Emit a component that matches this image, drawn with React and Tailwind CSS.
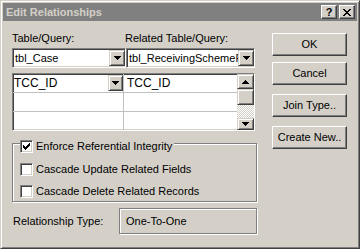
const raised =
  'border border-t-white border-l-white border-b-[#404040] border-r-[#404040] shadow-[inset_-1px_-1px_0_#808080]';
const raisedSmall =
  'border border-t-[#d4d0c8] border-l-[#d4d0c8] border-b-[#404040] border-r-[#404040] shadow-[inset_1px_1px_0_#fff,inset_-1px_-1px_0_#808080]';
const sunken =
  'border border-t-[#808080] border-l-[#808080] border-b-white border-r-white shadow-[inset_1px_1px_0_#404040,inset_-1px_-1px_0_#d4d0c8]';
const etched = 'border border-[#808080] shadow-[inset_1px_1px_0_#fff,1px_1px_0_#fff]';

/** Classic 7x4 pixel arrow. */
function Arrow({ up = false }) {
  const rows = [
    [0, 7],
    [1, 5],
    [2, 3],
    [3, 1],
  ];
  return (
    <svg width="7" height="4" viewBox="0 0 7 4" className="block" shapeRendering="crispEdges">
      {rows.map(([i, w]) => (
        <rect key={i} x={i} y={up ? 3 - i : i} width={w} height="1" fill="#000" />
      ))}
    </svg>
  );
}

function Check() {
  const tops = [2, 3, 4, 3, 2, 1, 0];
  return (
    <svg width="7" height="7" viewBox="0 0 7 7" className="block" shapeRendering="crispEdges">
      {tops.map((t, c) => (
        <rect key={c} x={c} y={t} width="1" height="3" fill="#000" />
      ))}
    </svg>
  );
}

function CloseGlyph() {
  const px = [
    [0, 1, 6, 7],
    [1, 2, 5, 6],
    [2, 3, 4, 5],
    [3, 4],
    [2, 3, 4, 5],
    [1, 2, 5, 6],
    [0, 1, 6, 7],
  ];
  return (
    <svg width="8" height="7" viewBox="0 0 8 7" className="block" shapeRendering="crispEdges">
      {px.map((row, y) => row.map((x) => <rect key={`${x}-${y}`} x={x} y={y} width="1" height="1" fill="#000" />))}
    </svg>
  );
}

function CheckBox({ checked, label }) {
  return (
    <div className="flex items-center h-[13px]">
      <div className={`w-[13px] h-[13px] bg-white flex items-center justify-center ${sunken}`}>
        {checked && <Check />}
      </div>
      <span className="ml-[3px] leading-[13px] whitespace-nowrap">{label}</span>
    </div>
  );
}

function Combo({ width, value }) {
  return (
    <div className={`${width} h-[20px] bg-white flex items-center ${sunken}`}>
      <span className="flex-1 min-w-0 overflow-hidden whitespace-nowrap pl-[2px]">{value}</span>
      <div className={`w-[16px] h-[16px] shrink-0 bg-[#d4d0c8] flex items-center justify-center ${raisedSmall}`}>
        <Arrow />
      </div>
    </div>
  );
}

function Button({ children, className = '' }) {
  return (
    <div className={`w-[75px] h-[23px] bg-[#d4d0c8] flex items-center justify-center ${raised} ${className}`}>
      {children}
    </div>
  );
}

export default function App() {
  return (
    <div
      className={`w-[360px] h-[249px] bg-[#d4d0c8] p-[2px] flex flex-col font-['Liberation_Sans',Arial,sans-serif] text-[11px] text-black border border-t-[#d4d0c8] border-l-[#d4d0c8] border-b-[#404040] border-r-[#404040] shadow-[inset_1px_1px_0_#fff,inset_-1px_-1px_0_#808080]`}
    >
      {/* Caption bar (inactive) */}
      <div className="h-[18px] bg-[#808080] flex items-center pl-[3px] pr-[2px]">
        <span className="flex-1 font-bold text-[#d4d0c8] leading-none">Edit Relationships</span>
        <div className={`w-[16px] h-[14px] bg-[#d4d0c8] flex items-center justify-center font-bold leading-none ${raised}`}>
          ?
        </div>
        <div className={`w-[16px] h-[14px] ml-[2px] bg-[#d4d0c8] flex items-center justify-center ${raised}`}>
          <CloseGlyph />
        </div>
      </div>

      <div className="flex pl-[9px] pt-[11px]">
        {/* Left column */}
        <div className="w-[245px] flex flex-col">
          <div className="flex h-[13px] leading-[13px]">
            <span className="w-[113px]">Table/Query:</span>
            <span>Related Table/Query:</span>
          </div>

          <div className="flex mt-[3px]">
            <Combo width="w-[114px]" value="tbl_Case" />
            <Combo width="w-[129px]" value="tbl_ReceivingSchemeP" />
          </div>

          {/* Join fields grid */}
          <div className={`mt-[5px] w-[243px] h-[58px] bg-white flex ${sunken}`}>
            <div className="flex-1 flex flex-col text-[12px]">
              <div className="flex h-[19px] border-b border-[#c0c0c0]">
                <div className="w-[111px] border-r border-[#c0c0c0] flex items-center pl-px">
                  <span className="flex-1">TCC_ID</span>
                  <div className={`w-[15px] h-[16px] bg-[#d4d0c8] flex items-center justify-center ${raisedSmall}`}>
                    <Arrow />
                  </div>
                </div>
                <div className="flex-1 flex items-center pl-[3px]">TCC_ID</div>
              </div>
              <div className="flex h-[19px] border-b border-[#c0c0c0]">
                <div className="w-[111px] border-r border-[#c0c0c0]" />
              </div>
              <div className="flex flex-1">
                <div className="w-[111px] border-r border-[#c0c0c0]" />
              </div>
            </div>
            <div className="w-[17px] flex flex-col">
              <div className={`h-[15px] bg-[#d4d0c8] flex items-center justify-center ${raisedSmall}`}>
                <Arrow up />
              </div>
              <div className={`h-[16px] bg-[#d4d0c8] ${raisedSmall}`} />
              <div className="flex-1 bg-[repeating-conic-gradient(#d4d0c8_0_25%,#fff_0_50%)] bg-[length:2px_2px]" />
              <div className={`h-[12px] bg-[#d4d0c8] flex items-center justify-center ${raisedSmall}`}>
                <Arrow />
              </div>
            </div>
          </div>

          {/* Integrity group */}
          <div className={`mt-[12px] w-[245px] flex flex-col pb-[3px] ${etched}`}>
            <div className="-mt-[4px] ml-[7px] self-start bg-[#d4d0c8] pr-[2px]">
              <CheckBox checked label="Enforce Referential Integrity" />
            </div>
            <div className="mt-[10px] ml-[7px]">
              <CheckBox label="Cascade Update Related Fields" />
            </div>
            <div className="mt-[9px] ml-[7px]">
              <CheckBox label="Cascade Delete Related Records" />
            </div>
          </div>

          <div className="mt-[6px] flex items-center">
            <span className="w-[107px] pl-px">Relationship Type:</span>
            <div className={`w-[138px] h-[26px] flex items-center pl-[6px] ${etched}`}>One-To-One</div>
          </div>
        </div>

        {/* Right column: buttons */}
        <div className="ml-[15px] mt-px flex flex-col">
          <Button>OK</Button>
          <Button className="mt-[6px]">Cancel</Button>
          <Button className="mt-[9px]">Join Type..</Button>
          <Button className="mt-[9px]">Create New..</Button>
        </div>
      </div>
    </div>
  );
}
